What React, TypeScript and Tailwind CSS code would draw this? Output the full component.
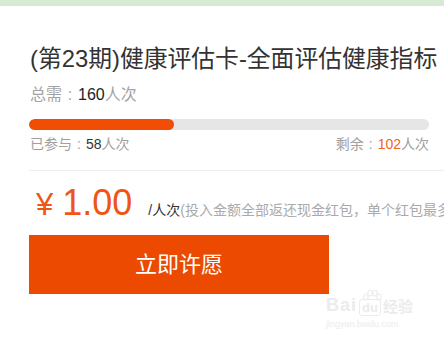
const font = "font-['Liberation_Sans','Noto_Sans_CJK_SC',sans-serif]";

function Colon() {
  return <span className="inline-block w-[1em] text-center">:</span>;
}

function BaiduMark() {
  return (
    <div className="pointer-events-none absolute left-[326px] top-[296px] flex flex-col items-start text-[#ececec]">
      <div className="flex items-end gap-[2px] leading-none">
        <span className="text-[18px] font-bold tracking-[1px]">Bai</span>
        <span className="relative text-[13px] font-bold">
          <svg className="absolute -top-[12px] left-[2px]" width="22" height="14" viewBox="0 0 22 14" fill="none" stroke="#ececec" strokeWidth="1.2">
            <ellipse cx="5" cy="8" rx="2.2" ry="3" />
            <ellipse cx="9" cy="4" rx="2.2" ry="3" />
            <ellipse cx="14" cy="4" rx="2.2" ry="3" />
            <ellipse cx="18" cy="8" rx="2.2" ry="3" />
          </svg>
          <span className="rounded-[3px] border border-[#ececec] px-[2px]">du</span>
        </span>
        <span className="text-[15px] font-bold">经验</span>
      </div>
      <span className="mt-[6px] text-[9px] leading-none">jingyan.baidu.com</span>
    </div>
  );
}

export default function App() {
  const total = 160;
  const joined = 58;
  const left = total - joined;

  return (
    <div className={`relative h-[348px] w-[444px] overflow-hidden bg-white ${font}`}>
      <div className="h-[6px] bg-[#d7ebd4]" />
      <div className="whitespace-nowrap pl-[29px]">
        <h1 className="mt-[37px] pl-px text-[23.8px] leading-[32px] font-normal text-[#333]">
          (第23期)健康评估卡-全面评估健康指标
        </h1>
        <p className="mt-[10px] pl-px text-[16px] leading-[20px] text-[#a3a3a3]">
          总需<Colon /><span className="text-[#222]">{total}</span>人次
        </p>
        <div className="mt-[14px] h-[11px] w-[400px] overflow-hidden rounded-full bg-[#e6e6e6]">
          <div className="h-full rounded-full bg-[#f24d05]" style={{ width: `${(joined / total) * 100}%` }} />
        </div>
        <div className="mt-[4px] flex w-[400px] justify-between pl-px text-[14px] leading-[20px] text-[#a0a0a0]">
          <span>
            已参与<Colon /><span className="text-[#333]">{joined}</span>人次
          </span>
          <span>
            剩余<Colon /><span className="text-[#f0641e]">{left}</span>人次
          </span>
        </div>
        <div className="mt-[16px] h-px bg-[#eeeeee]" />
        <div className="mt-[12px] flex items-baseline pl-[7px]">
          <span className="text-[31px] leading-[40px] text-[#f05514]">¥</span>
          <span className="ml-[9px] text-[36px] leading-[40px] text-[#f05514]">1.00</span>
          <span className="ml-[16px] text-[14px] text-[#333]">/人次</span>
          <span className="text-[14px] text-[#aaa]">(投入金额全部返还现金红包，单个红包最多不超过</span>
        </div>
        <button className="mt-[10px] flex h-[59px] w-[300px] items-center justify-center bg-[#eb4a00] text-[22px] text-white">
          立即许愿
        </button>
      </div>
      <BaiduMark />
    </div>
  );
}
